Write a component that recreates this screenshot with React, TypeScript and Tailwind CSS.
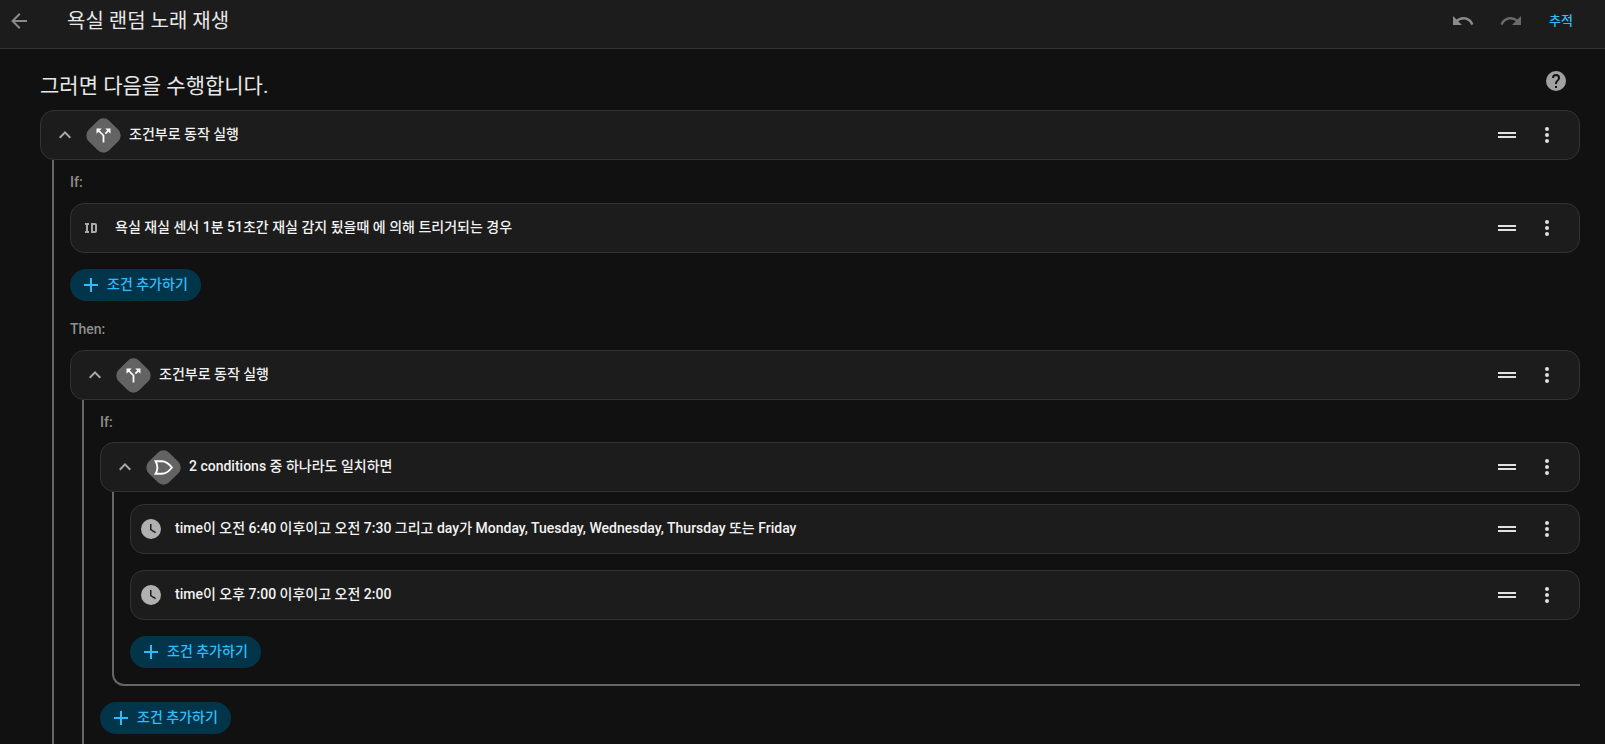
const fontStack = "font-['Roboto','Noto_Sans_CJK_KR',sans-serif]";

const paths = {
  back: "M20,11V13H8L13.5,18.5L12.08,19.92L4.16,12L12.08,4.08L13.5,5.5L8,11H20Z",
  undo: "M12.5,8C9.85,8 7.45,9 5.6,10.6L2,7V16H11L7.38,12.38C8.77,11.22 10.54,10.5 12.5,10.5C16.04,10.5 19.05,12.81 20.1,16L22.47,15.22C21.08,11.03 17.15,8 12.5,8Z",
  redo: "M18.4,10.6C16.55,9 14.15,8 11.5,8C6.85,8 2.92,11.03 1.54,15.22L3.9,16C4.95,12.81 7.95,10.5 11.5,10.5C13.45,10.5 15.23,11.22 16.62,12.38L13,16H22V7L18.4,10.6Z",
  help: "M15.07,11.25L14.17,12.17C13.45,12.89 13,13.5 13,15H11V14.5C11,13.39 11.45,12.39 12.17,11.67L13.41,10.41C13.78,10.05 14,9.55 14,9C14,7.89 13.1,7 12,7A2,2 0 0,0 10,9H8A4,4 0 0,1 12,5A4,4 0 0,1 16,9C16,9.88 15.64,10.67 15.07,11.25M13,19H11V17H13M12,2A10,10 0 0,0 2,12A10,10 0 0,0 12,22A10,10 0 0,0 22,12C22,6.47 17.5,2 12,2Z",
  drag: "M21 11H3V9H21V11M21 13H3V15H21V13Z",
  dots: "M12,16A2,2 0 0,1 14,18A2,2 0 0,1 12,20A2,2 0 0,1 10,18A2,2 0 0,1 12,16M12,10A2,2 0 0,1 14,12A2,2 0 0,1 12,14A2,2 0 0,1 10,12A2,2 0 0,1 12,10M12,4A2,2 0 0,1 14,6A2,2 0 0,1 12,8A2,2 0 0,1 10,6A2,2 0 0,1 12,4Z",
  chevron: "M7.41,15.41L12,10.83L16.59,15.41L18,14L12,8L6,14L7.41,15.41Z",
  split: "M14,4L16.29,6.29L13.41,9.17L14.83,10.59L17.71,7.71L20,10V4M10,4H4V10L6.29,7.71L11,12.41V20H13V11.59L7.71,6.29",
  id: "M10 7V9H9V15H10V17H6V15H7V9H6V7H10M16 7C17.11 7 18 7.9 18 9V15C18 16.11 17.11 17 16 17H12V7M14 9V15H16V9H14Z",
  clock: "M12,2A10,10 0 0,0 2,12A10,10 0 0,0 12,22A10,10 0 0,0 22,12A10,10 0 0,0 12,2M16.2,16.2L11,13V7H12.5V12.2L17,14.9L16.2,16.2Z",
  plus: "M19,13H13V19H11V13H5V11H11V5H13V11H19V13Z",
};

function Icon({ d, className }: { d: string; className?: string }) {
  return (
    <svg viewBox="0 0 24 24" className={className} fill="currentColor">
      <path d={d} />
    </svg>
  );
}

function Diamond({ children }: { children: React.ReactNode }) {
  return (
    <div className="w-[34px] h-[34px] shrink-0 relative flex items-center justify-center">
      <div className="absolute left-[2.5px] top-[2.5px] w-[29px] h-[29px] rounded-[8px] rotate-45 bg-[#636363]" />
      <div className="relative">{children}</div>
    </div>
  );
}

function Card({
  leading,
  text,
  textLeft,
}: {
  leading: React.ReactNode;
  text: string;
  textLeft: string;
}) {
  return (
    <div className="h-[50px] flex items-center rounded-[14px] border border-[#333333] bg-[#1c1c1c]">
      {leading}
      <span className={`${textLeft} flex-1 -mt-[2px] text-[14px] leading-5 font-medium text-[#f2f2f2] whitespace-nowrap`}>{text}</span>
      <Icon d={paths.drag} className="w-6 h-6 text-[#e1e1e1]" />
      <div className="w-4" />
      <Icon d={paths.dots} className="w-6 h-6 text-[#e1e1e1]" />
      <div className="w-5" />
    </div>
  );
}

function ExpandLeading({ children }: { children: React.ReactNode }) {
  return (
    <div className="flex items-center">
      <Icon d={paths.chevron} className="ml-[12px] w-6 h-6 text-[#aaaaaa]" />
      <div className="ml-[9px]">{children}</div>
    </div>
  );
}

function AddButton() {
  return (
    <div className="mt-4 w-[131px] h-8 flex items-center rounded-full bg-[#03354a] text-[#2ebdfa]">
      <Icon d={paths.plus} className="ml-[9px] w-6 h-6" />
      <span className="ml-[4px] -mt-[2px] text-[14px] leading-5 font-medium whitespace-nowrap">조건 추가하기</span>
    </div>
  );
}

const SplitIcon = () => (
  <Diamond>
    <Icon d={paths.split} className="w-[21px] h-[21px] text-white" />
  </Diamond>
);

const OrIcon = () => (
  <Diamond>
    <svg viewBox="0 0 24 24" className="w-[21px] h-[21px]" fill="none" stroke="#ffffff" strokeWidth="2.2">
      <path d="M3 4.8H10C14.5 4.8 18.5 8 21.6 12C18.5 16 14.5 19.2 10 19.2H3C5.4 14.8 5.4 9.2 3 4.8Z" />
    </svg>
  </Diamond>
);

const ClockLeading = () => <Icon d={paths.clock} className="ml-[8px] w-6 h-6 text-[#b0b0b0]" />;

export default function App() {
  return (
    <div className={`${fontStack} h-[744px] overflow-hidden bg-[#111111]`}>
      <header className="h-[49px] pb-[7px] flex items-center bg-[#1c1c1c] border-b border-[#333333]">
        <Icon d={paths.back} className="ml-[7px] w-6 h-6 text-[#8a8a8a]" />
        <h1 className="ml-[36px] flex-1 text-[20px] leading-7 font-normal text-[#e8e8e8]">욕실 랜덤 노래 재생</h1>
        <Icon d={paths.undo} className="w-6 h-6 text-[#8a8a8a]" />
        <Icon d={paths.redo} className="ml-6 w-6 h-6 text-[#6a6a6a]" />
        <span className="ml-[26px] mr-[32px] text-[13px] leading-4 font-medium text-[#2ebdfa]">추적</span>
      </header>

      <main className="pl-10 pr-[25px]">
        <div className="h-[61px] flex items-center">
          <h2 className="flex-1 pt-[13px] text-[21px] leading-8 font-normal text-[#e8e8e8]">그러면 다음을 수행합니다.</h2>
          <Icon d={paths.help} className="mr-3 mt-[3px] w-6 h-6 text-[#a0a0a0]" />
        </div>

        <Card leading={<ExpandLeading><SplitIcon /></ExpandLeading>} text="조건부로 동작 실행" textLeft="ml-[9px]" />

        <div className="ml-3 border-l-2 border-[#666666] pl-4">
          <p className="pt-[14px] pb-[13px] text-[14px] leading-4 font-medium text-[#8e8e8e]">If:</p>
          <Card
            leading={<Icon d={paths.id} className="ml-[8px] w-6 h-6 text-[#aaaaaa]" />}
            text="욕실 재실 센서 1분 51초간 재실 감지 됬을때 에 의해 트리거되는 경우"
            textLeft="ml-[12px]"
          />
          <AddButton />

          <p className="pt-[20px] pb-[13px] text-[14px] leading-4 font-medium text-[#8e8e8e]">Then:</p>
          <Card leading={<ExpandLeading><SplitIcon /></ExpandLeading>} text="조건부로 동작 실행" textLeft="ml-[9px]" />

          <div className="ml-3 border-l-2 border-[#666666] pl-4">
            <p className="pt-[14px] pb-[12px] text-[14px] leading-4 font-medium text-[#8e8e8e]">If:</p>
            <Card leading={<ExpandLeading><OrIcon /></ExpandLeading>} text="2 conditions 중 하나라도 일치하면" textLeft="ml-[9px]" />

            <div className="ml-3 pl-4 pt-3 pb-4 border-l-2 border-b-2 border-[#666666] rounded-bl-xl">
              <Card
                leading={<ClockLeading />}
                text="time이 오전 6:40 이후이고 오전 7:30 그리고 day가 Monday, Tuesday, Wednesday, Thursday 또는 Friday"
                textLeft="ml-[12px]"
              />
              <div className="h-4" />
              <Card leading={<ClockLeading />} text="time이 오후 7:00 이후이고 오전 2:00" textLeft="ml-[12px]" />
              <AddButton />
            </div>
            <AddButton />
            <div className="h-10" />
          </div>
        </div>
      </main>
    </div>
  );
}
